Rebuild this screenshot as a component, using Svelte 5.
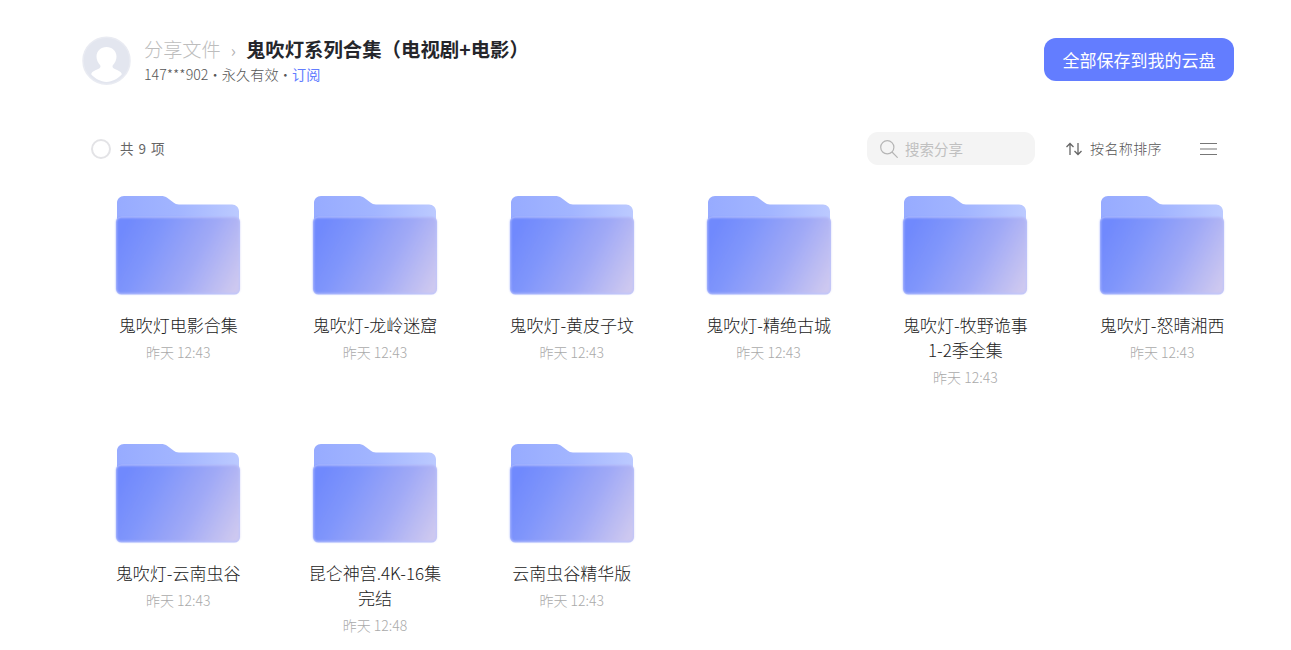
<script>
  const files = [
    { name: '鬼吹灯电影合集', time: '昨天 12:43' },
    { name: '鬼吹灯-龙岭迷窟', time: '昨天 12:43' },
    { name: '鬼吹灯-黄皮子坟', time: '昨天 12:43' },
    { name: '鬼吹灯-精绝古城', time: '昨天 12:43' },
    { name: '鬼吹灯-牧野诡事1-2季全集', time: '昨天 12:43' },
    { name: '鬼吹灯-怒晴湘西', time: '昨天 12:43' },
    { name: '鬼吹灯-云南虫谷', time: '昨天 12:43' },
    { name: '昆仑神宫.4K-16集完结', time: '昨天 12:48' },
    { name: '云南虫谷精华版', time: '昨天 12:43' }
  ];
</script>

<main class="page">
  <header class="head">
    <div class="avatar">
      <svg viewBox="0 0 50 50" width="50" height="50">
        <circle cx="25.500" cy="25.700" r="23.500" fill="#e3e6ef" stroke="#e9ebf2" stroke-width="1.500" />
        <path d="M25.500 12C19.900 12 15.500 16 15.500 21.500C15.500 25.100 17 28 19 30C19.800 31 19.600 32.500 18.500 33.200C16.500 34.500 12 35.700 10.500 38.200C10.100 38.900 10.200 39.500 10.700 40.100C14.300 43.500 19.500 47 25.500 47C31.500 47 36.700 43.500 40.300 40.100C40.800 39.500 40.900 38.900 40.500 38.200C39 35.700 34.500 34.500 32.500 33.200C31.400 32.500 31.200 31 32 30C34 28 35.500 25.100 35.500 21.500C35.500 16 31.100 12 25.500 12Z" fill="#fff" />
      </svg>
    </div>
    <div class="info">
      <div class="crumbs">
        <span class="root">分享文件</span>
        <span class="sep">›</span>
        <strong class="title">鬼吹灯系列合集（电视剧+电影）</strong>
      </div>
      <div class="meta"><span class="uid">147***902</span> · 永久有效 · <span class="link">订阅</span></div>
    </div>
    <button class="save">全部保存到我的云盘</button>
  </header>

  <div class="toolbar">
    <span class="check"></span>
    <span class="count">共 9 项</span>
    <div class="search">
      <svg viewBox="0 0 20 20" width="20" height="20" fill="none" stroke="#b5b5b5" stroke-width="1.200">
        <circle cx="8.300" cy="8.300" r="6.600" />
        <path d="M13.500 13.500l4.800 4.800" stroke-linecap="round" />
      </svg>
      <span>搜索分享</span>
    </div>
    <div class="sort">
      <svg viewBox="0 0 18 16" width="18" height="16" fill="none" stroke="#666" stroke-width="1.300">
        <path d="M5 14V2.500M1.500 6L5 2.500 8.500 6M13 2v11.500M9.500 10l3.500 3.500 3.500-3.500" />
      </svg>
      <span class="sort-label">按名称排序</span>
    </div>
    <svg class="menu" viewBox="0 0 17 14" width="17" height="14" stroke="#777" stroke-width="1.100">
      <path d="M0 1.500h17M0 7h17M0 12.500h17" />
    </svg>
  </div>

  <section class="grid">
    {#each files as f}
      <article class="item">
        <svg class="folder" viewBox="0 0 130 106" width="130" height="106">
          <defs>
            <linearGradient id="back" x1="0" y1="0" x2="1" y2="0">
              <stop offset="0" stop-color="#97abff" />
              <stop offset="0.5" stop-color="#a2b5ff" />
              <stop offset="1" stop-color="#bccaff" />
            </linearGradient>
            <linearGradient id="front" gradientUnits="userSpaceOnUse" x1="15" y1="30" x2="126" y2="90">
              <stop offset="0" stop-color="#7089fd" />
              <stop offset="0.25" stop-color="#7f95fb" />
              <stop offset="0.62" stop-color="#a0a9f6" />
              <stop offset="1" stop-color="#cdc8f0" />
            </linearGradient>
            <filter id="soft" x="-5%" y="-5%" width="110%" height="110%">
              <feGaussianBlur stdDeviation="0.8" />
            </filter>
          </defs>
          <path d="M4 12c0-4 3-7 7-7h37c2.500 0 4.500.6 6.500 2l6 4.500c1.500 1.100 3 2 5.500 2h53c4 0 7 3 7 7v9.500H4z" fill="url(#back)" />
          <rect x="3" y="25.500" width="124" height="78" rx="5.500" fill="#bcc5fd" />
          <rect x="3.500" y="26.500" width="123" height="76" rx="4.500" fill="url(#front)" filter="url(#soft)" />
        </svg>
        <div class="name">{f.name}</div>
        <div class="time">{f.time}</div>
      </article>
    {/each}
  </section>
</main>

<style>
  :global(body) {
    margin: 0;
    background: #fff;
    font-family: "Noto Sans CJK SC", "Noto Sans", sans-serif;
  }
  .page {
    width: 1291px;
    height: 650px;
    overflow: hidden;
    box-sizing: border-box;
  }
  .head {
    display: flex;
    align-items: flex-start;
    padding: 35px 57px 0 81px;
    height: 131px;
    box-sizing: border-box;
  }
  .avatar {
    width: 50px;
    height: 50px;
    margin-right: 13px;
  }
  .info {
    flex: 1;
  }
  .crumbs {
    display: flex;
    align-items: center;
    height: 30px;
    margin-top: -1px;
  }
  .root {
    font-size: 19.200px;
    color: #bdbdbd;
    margin-top: -1px;
    font-weight: 300;
  }
  .sep {
    font-size: 17px;
    color: #b0b0b0;
    margin: 0 10px 0 10px;
  }
  .title {
    font-size: 19.400px;
    font-weight: 700;
    color: #25262b;
    margin-top: -1px;
  }
  .meta {
    font-size: 14.200px;
    line-height: 20px;
    color: #555;
    font-weight: 300;
    word-spacing: -3.500px;
  }
  .uid {
    letter-spacing: 0;
  }
  .link {
    color: #637dff;
    font-weight: 400;
  }
  .save {
    width: 190px;
    height: 43px;
    margin-top: 3px;
    border: none;
    border-radius: 12px;
    background: #637dff;
    color: #fff;
    font: 400 17px "Noto Sans CJK SC", sans-serif;
    padding: 0;
  }
  .toolbar {
    display: flex;
    align-items: center;
    height: 33px;
    margin-top: 1px;
    padding-left: 91px;
  }
  .check {
    width: 16px;
    height: 16px;
    border: 2px solid #e3e3e6;
    border-radius: 50%;
    margin-right: 9px;
  }
  .count {
    font-size: 13.500px;
    color: #666;
    width: 747px;
    word-spacing: 2px;
    margin-bottom: 2px;
  }
  .search {
    display: flex;
    align-items: center;
    box-sizing: border-box;
    width: 168px;
    height: 33px;
    padding-left: 12px;
    background: #f4f4f4;
    border-radius: 11px;
    font-size: 14.500px;
    color: #c0c0c0;
    font-weight: 400;
  }
  .search svg {
    margin-right: 6px;
  }
  .sort {
    display: flex;
    align-items: center;
    margin-left: 30px;
    font-size: 14px;
    letter-spacing: 0.4px;
    color: #555;
    font-weight: 300;
  }
  .sort svg {
    margin-right: 7px;
  }
  .sort-label {
    margin-bottom: 2px;
  }
  .menu {
    margin-left: 37.500px;
  }
  .grid {
    display: grid;
    grid-template-columns: repeat(6, 196.8px);
    grid-auto-rows: 248px;
    margin-top: 30px;
    padding-left: 79.800px;
  }
  .item {
    display: flex;
    flex-direction: column;
    align-items: center;
  }
  .folder {
    display: block;
    margin-top: -4px;
  }
  .name {
    width: 136px;
    margin-top: 15px;
    font-size: 17px;
    line-height: 25px;
    color: #222;
    font-weight: 300;
    text-align: center;
  }
  .time {
    margin-top: 3px;
    font-size: 14px;
    line-height: 24px;
    color: #aaa;
    font-weight: 300;
  }
</style>
